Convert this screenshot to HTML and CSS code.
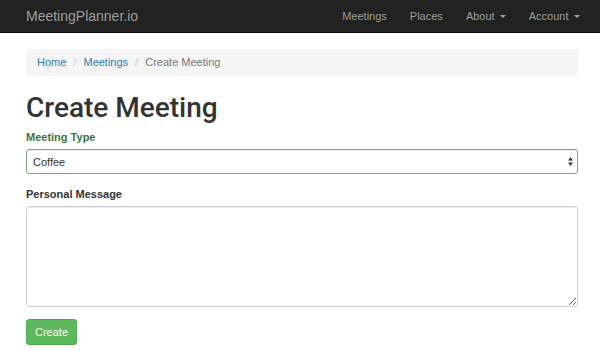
FILE: index.html
```html
<!DOCTYPE html>
<html lang="en">
<head>
<meta charset="utf-8">
<title>Create Meeting</title>
<link rel="stylesheet" href="styles.css">
</head>
<body>
<nav class="navbar">
  <div class="nav-inner">
    <a class="brand" href="#">MeetingPlanner.io</a>
    <ul class="nav">
      <li><a href="#">Meetings</a></li>
      <li><a href="#">Places</a></li>
      <li><a href="#">About <span class="caret"></span></a></li>
      <li><a href="#">Account <span class="caret"></span></a></li>
    </ul>
  </div>
</nav>
<main class="container">
  <ol class="breadcrumb">
    <li><a href="#">Home</a></li>
    <li><a href="#">Meetings</a></li>
    <li class="active">Create Meeting</li>
  </ol>
  <h1 class="title">Create Meeting</h1>
  <form class="form">
    <div class="form-group has-success">
      <label class="control-label" for="type">Meeting Type</label>
      <div class="select-wrap">
        <select id="type" class="form-control select"><option>Coffee</option></select>
        <svg class="select-arrows" width="5" height="9" viewBox="0 0 5 9"><path d="M0 3.6 L2.5 0 L5 3.6 Z M0 5.4 L2.5 9 L5 5.4 Z" fill="#3a3a3a"/></svg>
      </div>
    </div>
    <div class="form-group">
      <label class="control-label" for="msg">Personal Message</label>
      <textarea id="msg" class="form-control textarea"></textarea>
    </div>
    <button type="button" class="btn-success">Create</button>
  </form>
</main>
</body>
</html>
```
FILE: styles.css
```css
* { box-sizing: border-box; }
body {
  margin: 0;
  font-family: "Liberation Sans", Arial, sans-serif;
  font-size: 11px;
  line-height: 15px;
  color: #333;
  background: #fff;
}
.navbar {
  background: #222;
  border-bottom: 1px solid #080808;
  height: 33px;
}
.nav-inner {
  width: 552px;
  margin-left: 26px;
  height: 32px;
  display: flex;
  align-items: center;
  justify-content: space-between;
}
.brand {
  font-size: 14px;
  line-height: 18px;
  color: #9d9d9d;
  text-decoration: none;
}
.nav {
  display: flex;
  list-style: none;
  margin: 0 -13px 0 0;
  padding: 0;
}
.nav a {
  display: block;
  padding: 0 11.5px;
  color: #9d9d9d;
  text-decoration: none;
  line-height: 15px;
}
.caret {
  display: inline-block;
  width: 0;
  height: 0;
  margin-left: 2px;
  vertical-align: middle;
  border-top: 3px solid #9d9d9d;
  border-left: 3px solid transparent;
  border-right: 3px solid transparent;
}
.container {
  width: 552px;
  margin-left: 26px;
}
.breadcrumb {
  display: flex;
  list-style: none;
  margin: 16px 0 0;
  padding: 6px 11px;
  background: #f5f5f5;
  border-radius: 3px;
}
.breadcrumb a { color: #337ab7; text-decoration: none; }
.breadcrumb li + li::before {
  content: "/\00a0";
  padding: 0 4px 0 7px;
  color: #ccc;
}
.breadcrumb .active { color: #777; }
.title {
  font-family: Roboto, "Liberation Sans", sans-serif;
  font-weight: 500;
  font-size: 28px;
  line-height: 31px;
  margin: 16px 0 7px;
  color: #333;
}
.form { margin: 0; }
.form-group { margin-bottom: 13px; }
.form-group + .form-group { margin-bottom: 12px; }
.control-label {
  display: block;
  font-weight: bold;
  margin-bottom: 4px;
}
.has-success .control-label { color: #3c763d; }
.select-wrap { position: relative; }
.form-control {
  display: block;
  width: 100%;
  font-family: inherit;
  font-size: 11px;
  color: #555;
  background: #fff;
  border: 1px solid #d0d0d0;
  border-radius: 3px;
  box-shadow: inset 0 1px 1px rgba(0,0,0,.075);
  margin: 0;
}
.select {
  -webkit-appearance: none;
  appearance: none;
  height: 25px;
  padding: 0 6px;
  color: #333;
}
.has-success .form-control { border-color: #7aa37a; }
.select-arrows {
  position: absolute;
  right: 5px;
  top: 8px;
}
.textarea {
  height: 101px;
  padding: 4px 6px;
  resize: vertical;
}
.btn-success {
  display: inline-block;
  height: 26px;
  padding: 0 8px;
  font-family: inherit;
  font-size: 11px;
  color: #fff;
  background: #5cb85c;
  border: 1px solid #4cae4c;
  border-radius: 3px;
  cursor: pointer;
}
```
